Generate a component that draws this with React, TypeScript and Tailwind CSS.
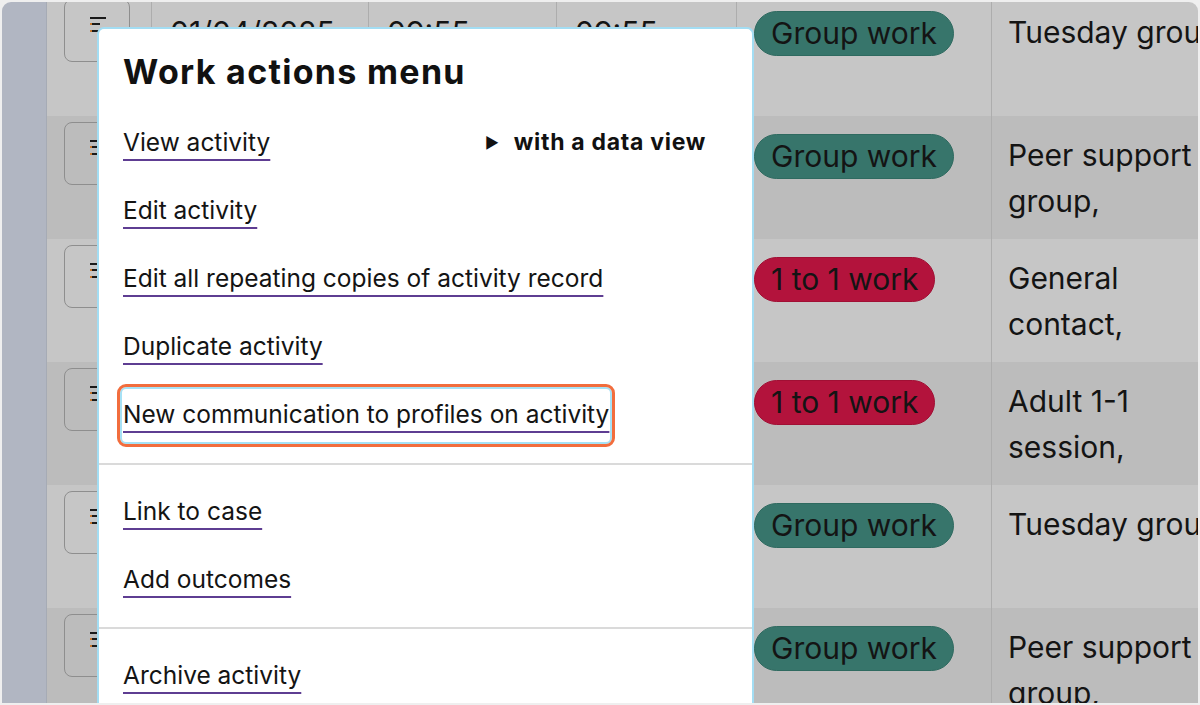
import React from "react";

const FONT = { fontFamily: "Inter, 'Noto Sans', sans-serif" };

type Row = {
  date: string;
  start: string;
  end: string;
  type: "group" | "one";
  desc: string[];
};

const rows: Row[] = [
  { date: "01/04/2025", start: "09:55", end: "09:55", type: "group", desc: ["Tuesday group"] },
  { date: "01/04/2025", start: "10:30", end: "11:30", type: "group", desc: ["Peer support", "group,"] },
  { date: "02/04/2025", start: "09:00", end: "09:30", type: "one", desc: ["General", "contact,"] },
  { date: "02/04/2025", start: "14:00", end: "15:00", type: "one", desc: ["Adult 1-1", "session,"] },
  { date: "08/04/2025", start: "09:55", end: "09:55", type: "group", desc: ["Tuesday group"] },
  { date: "08/04/2025", start: "10:30", end: "11:30", type: "group", desc: ["Peer support", "group,"] },
];

function MenuIcon() {
  return (
    <svg width="16" height="16" viewBox="0 0 16 16" className="block">
      <rect x="0" y="0" width="16" height="2" fill="#1a1a1a" />
      <rect x="0" y="6" width="10" height="2" fill="#1a1a1a" />
      <rect x="0" y="13" width="10" height="2" fill="#1a1a1a" />
      <rect x="0" y="6" width="2" height="2" fill="#c8782c" />
      <rect x="0" y="13" width="2" height="2" fill="#c8782c" />
    </svg>
  );
}

function TableRow({ row, index }: { row: Row; index: number }) {
  const bg = index % 2 === 0 ? "bg-[#c6c6c6]" : "bg-[#bcbcbc]";
  return (
    <div className={`flex h-[123px] shrink-0 ${bg} text-[30px] leading-[46px] text-[#141414]`}>
      <div className="w-[105px] shrink-0 border-r border-[#adadad] pl-[17px] pt-[6px]">
        <div className="flex h-[63px] w-[66px] items-start justify-start rounded-[8px] border-[1.5px] border-[#8e8e8e] pl-[25px] pt-[17px]">
          <MenuIcon />
        </div>
      </div>
      <div className="w-[217px] shrink-0 border-r border-[#adadad] pl-[18px] pt-[16px]">{row.date}</div>
      <div className="w-[188px] shrink-0 border-r border-[#adadad] pl-[18px] pt-[16px]">{row.start}</div>
      <div className="w-[180px] shrink-0 border-r border-[#adadad] pl-[18px] pt-[16px]">{row.end}</div>
      <div className="w-[255px] shrink-0 border-r border-[#adadad] pl-[17px] pt-[17px]">
        {row.type === "group" ? (
          <span className="inline-flex h-[45px] items-center rounded-full border border-[#2f6a60] bg-[#37756b] px-[16px] leading-none whitespace-nowrap">
            Group work
          </span>
        ) : (
          <span className="inline-flex h-[45px] items-center rounded-full border border-[#a10f34] bg-[#b3133c] px-[16px] leading-none whitespace-nowrap">
            1 to 1 work
          </span>
        )}
      </div>
      <div className="min-w-0 flex-1 pl-[16px] pt-[16px]">
        {row.desc.map((d) => (
          <div key={d} className="whitespace-nowrap">
            {d}
          </div>
        ))}
      </div>
    </div>
  );
}

function MenuLink({ children }: { children: React.ReactNode }) {
  return (
    <a
      href="#"
      className="text-[24.5px] leading-[30px] text-[#141414] underline decoration-[#5e3d92] decoration-[2px] underline-offset-[8px] whitespace-nowrap"
    >
      {children}
    </a>
  );
}

function Item({ children, extra }: { children: React.ReactNode; extra?: React.ReactNode }) {
  return (
    <div className="flex h-[68px] items-center">
      {children}
      {extra}
    </div>
  );
}

export default function App() {
  return (
    <div className="h-[705px] w-[1200px] overflow-hidden bg-[#efefef] px-[2px] pt-[2px] pb-[2px]" style={FONT}>
      <div className="relative flex h-full overflow-hidden rounded-t-[9px]">
        <div className="w-[45px] shrink-0 border-r border-[#a6abb5] bg-[#b1b6c2]" />
        <div className="flex min-w-0 flex-1 flex-col overflow-hidden">
          <div className="-mt-[9px] flex flex-col">
            {rows.map((r, i) => (
              <TableRow key={i} row={r} index={i} />
            ))}
          </div>
        </div>

        {/* Modal dialog */}
        <div className="absolute left-[95px] top-[25px] h-[700px] w-[657px] rounded-t-[7px] border-2 border-b-0 border-[#a3ddf3] bg-white">
          <div className="px-[24px] pt-[23px]">
            <h2 className="text-[34px] font-bold leading-[40px] tracking-[1.3px] text-[#111]">Work actions menu</h2>
          </div>
          <div className="px-[24px] pt-[16px] pb-[15px]">
            <Item
              extra={
                <div className="ml-auto mr-[22px] flex items-center gap-[14px] text-[23px] font-bold tracking-[0.7px] text-[#111]">
                  <span className="text-[15px] leading-none">▶</span>
                  <span>with a data view</span>
                </div>
              }
            >
              <MenuLink>View activity</MenuLink>
            </Item>
            <Item>
              <MenuLink>Edit activity</MenuLink>
            </Item>
            <Item>
              <MenuLink>Edit all repeating copies of activity record</MenuLink>
            </Item>
            <Item>
              <MenuLink>Duplicate activity</MenuLink>
            </Item>
            <Item>
              <span className="relative inline-block">
                <MenuLink>New communication to profiles on activity</MenuLink>
                <span className="pointer-events-none absolute -top-[15px] -bottom-[18px] -left-[6px] -right-[6px] rounded-[9px] border-[3px] border-[#f26d3d] shadow-[inset_0_0_0_2px_#a6e1f5]" />
              </span>
            </Item>
          </div>
          <div className="h-[2px] bg-[#dadada]" />
          <div className="px-[24px] pt-[12px] pb-[14px]">
            <Item>
              <MenuLink>Link to case</MenuLink>
            </Item>
            <Item>
              <MenuLink>Add outcomes</MenuLink>
            </Item>
          </div>
          <div className="h-[2px] bg-[#dadada]" />
          <div className="px-[24px] pt-[12px]">
            <Item>
              <MenuLink>Archive activity</MenuLink>
            </Item>
          </div>
        </div>
      </div>
    </div>
  );
}
